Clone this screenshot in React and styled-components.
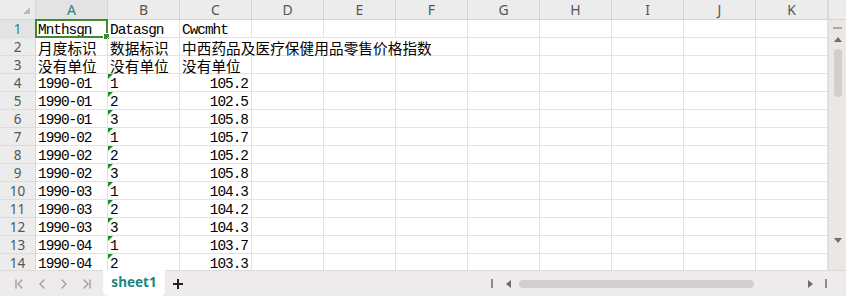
import React from "react";
import styled, { createGlobalStyle, css } from "styled-components";

const Global = createGlobalStyle`
  html, body { margin: 0; padding: 0; background: #fff; }
  body { font-family: "Noto Sans", "Noto Sans CJK SC", sans-serif; }
`;

const COLS = ["A", "B", "C", "D", "E", "F", "G", "H", "I", "J", "K"];
const GREEN = "#3f8a2c";
const TEAL = "#1f8580";

const Frame = styled.div`
  width: 846px;
  height: 296px;
  display: flex;
  flex-direction: column;
  overflow: hidden;
`;

const Main = styled.div`
  display: flex;
  height: 270px;
  overflow: hidden;
`;

const Sheet = styled.div`
  display: grid;
  grid-template-columns: 36px repeat(11, 72px);
  grid-template-rows: 20px;
  grid-auto-rows: 18px;
  width: 828px;
  height: 270px;
  overflow: hidden;
  align-content: start;
`;

const Corner = styled.div`
  position: relative;
  background: #ececec;
  border-right: 1px solid #d6d6d6;
  border-bottom: 1px solid #d6d6d6;
  box-sizing: border-box;
  &::after {
    content: "";
    position: absolute;
    right: 5px;
    bottom: 5px;
    border-left: 7px solid transparent;
    border-bottom: 7px solid #b9b9b9;
  }
`;

const ColHead = styled.div`
  background: ${(p) => (p.$active ? "#e3e3e3" : "#ececec")};
  border-right: 1px solid #d6d6d6;
  border-bottom: 1px solid #d6d6d6;
  box-sizing: border-box;
  display: flex;
  align-items: center;
  justify-content: center;
  font-family: "Noto Sans", sans-serif;
  font-size: 14px;
  color: ${(p) => (p.$active ? TEAL : "#555")};
`;

const RowHead = styled.div`
  background: ${(p) => (p.$active ? "#e3e3e3" : "#ececec")};
  border-right: 1px solid #d6d6d6;
  border-bottom: 1px solid #dcdcdc;
  box-sizing: border-box;
  display: flex;
  align-items: center;
  justify-content: center;
  font-family: "Noto Sans", sans-serif;
  font-size: 13.5px;
  color: ${(p) => (p.$active ? TEAL : "#555")};
`;

const Cell = styled.div`
  position: relative;
  border-right: 1px solid #e2e2e2;
  border-bottom: 1px solid #e2e2e2;
  box-sizing: border-box;
  white-space: nowrap;
  padding: 1px 3px 0 2px;
  line-height: 17px;
  color: #000;
  text-align: ${(p) => (p.$right ? "right" : "left")};
  grid-column: span ${(p) => p.$span || 1};
  ${(p) =>
    p.$cjk
      ? css`
          font-family: "Noto Sans CJK SC", "Noto Sans", sans-serif;
          font-size: 14.6px;
          letter-spacing: 0.1px;
        `
      : css`
          font-family: "Liberation Mono", "DejaVu Sans Mono", monospace;
          font-size: 14.4px;
          letter-spacing: -1px;
          padding-top: 2px;
        `}
  ${(p) =>
    p.$flag &&
    css`
      &::before {
        content: "";
        position: absolute;
        left: 0;
        top: 0;
        border-top: 5px solid #1a8a2a;
        border-right: 5px solid transparent;
      }
    `}
`;

const Selection = styled.div`
  position: absolute;
  left: -1px;
  top: -1px;
  right: -1px;
  bottom: -1px;
  border: 2px solid ${GREEN};
  pointer-events: none;
  &::after {
    content: "";
    position: absolute;
    right: -4px;
    bottom: -4px;
    width: 5px;
    height: 5px;
    background: ${GREEN};
    border: 1px solid #fff;
  }
`;

const VScroll = styled.div`
  width: 18px;
  display: flex;
  flex-direction: column;
  align-items: center;
  background: #ebe7e5;
  border-left: 1px solid #dcdcdc;
  box-sizing: border-box;
`;

const VScrollHead = styled.div`
  align-self: stretch;
  height: 20px;
  background: #ececec;
  border-bottom: 1px solid #d6d6d6;
  box-sizing: border-box;
`;

const Dash = styled.div`
  width: 9px;
  height: 2px;
  background: #a9a9a9;
  margin-top: 7px;
`;

const Tri = styled.div`
  width: 0;
  height: 0;
  ${(p) =>
    p.$dir === "up" &&
    css`
      border-left: 4px solid transparent;
      border-right: 4px solid transparent;
      border-bottom: 5px solid #6e6e6e;
    `}
  ${(p) =>
    p.$dir === "down" &&
    css`
      border-left: 4px solid transparent;
      border-right: 4px solid transparent;
      border-top: 5px solid #6e6e6e;
    `}
  ${(p) =>
    p.$dir === "left" &&
    css`
      border-top: 4px solid transparent;
      border-bottom: 4px solid transparent;
      border-right: 5px solid #6e6e6e;
    `}
  ${(p) =>
    p.$dir === "right" &&
    css`
      border-top: 4px solid transparent;
      border-bottom: 4px solid transparent;
      border-left: 5px solid #6e6e6e;
    `}
`;

const VThumb = styled.div`
  width: 8px;
  height: 48px;
  border-radius: 4px;
  background: #d2cecd;
  margin-top: 7px;
`;

const VUp = styled.div`
  margin-top: 8px;
`;

const VSpacer = styled.div`
  flex: 1;
`;

const VDown = styled.div`
  margin-bottom: 27px;
`;

const Bottom = styled.div`
  height: 26px;
  background: #efebea;
  border-top: 1px solid #dedada;
  box-sizing: border-box;
  display: flex;
  align-items: stretch;
`;

const Nav = styled.div`
  display: flex;
  align-items: center;
  gap: 6px;
  padding-left: 12px;
  width: 103px;
  box-sizing: border-box;
`;

const NavBtn = styled.div`
  width: 16px;
  height: 16px;
  display: flex;
  align-items: center;
  justify-content: center;
`;

const Tab = styled.div`
  width: 62px;
  margin-top: -1px;
  background: #fff;
  border-radius: 0 0 5px 5px;
  display: flex;
  align-items: center;
  justify-content: center;
  font-family: "Noto Sans", sans-serif;
  font-weight: 700;
  font-size: 13.5px;
  color: ${TEAL};
  padding-bottom: 2px;
  box-sizing: border-box;
`;

const Plus = styled.div`
  width: 24px;
  display: flex;
  align-items: center;
  justify-content: center;
  margin-left: 1px;
`;

const HScroll = styled.div`
  margin-left: auto;
  width: 358px;
  display: flex;
  align-items: center;
  padding: 0 0 0 3px;
  box-sizing: border-box;
`;

const Bar = styled.div`
  width: 2px;
  height: 9px;
  background: #8e8e8e;
`;

const HThumb = styled.div`
  width: 235px;
  height: 8px;
  border-radius: 4px;
  background: #d3cfce;
  margin-left: 8px;
`;

const HLeft = styled.div`
  margin-left: 13px;
`;

const HRight = styled.div`
  margin-left: auto;
  margin-right: 12px;
`;

const HEnd = styled.div`
  margin-right: 19px;
`;

const Chevron = ({ dir, bar }) => (
  <svg width="14" height="14" viewBox="0 0 14 14" fill="none" stroke="#a5a5a5" strokeWidth="1.6" strokeLinecap="round" strokeLinejoin="round">
    {dir === "left" ? <path d="M9 3 L5 7 L9 11" /> : <path d="M5 3 L9 7 L5 11" />}
    {bar && (dir === "left" ? <path d="M3 3 V11" /> : <path d="M11 3 V11" />)}
  </svg>
);

const rows = [
  [
    { t: "Mnthsgn", sel: true },
    { t: "Datasgn" },
    { t: "Cwcmht" },
  ],
  [
    { t: "月度标识", cjk: true },
    { t: "数据标识", cjk: true },
    { t: "中西药品及医疗保健用品零售价格指数", cjk: true, span: 4 },
  ],
  [
    { t: "没有单位", cjk: true },
    { t: "没有单位", cjk: true },
    { t: "没有单位", cjk: true },
  ],
];

const data = [
  ["1990-01", "1", "105.2"],
  ["1990-01", "2", "102.5"],
  ["1990-01", "3", "105.8"],
  ["1990-02", "1", "105.7"],
  ["1990-02", "2", "105.2"],
  ["1990-02", "3", "105.8"],
  ["1990-03", "1", "104.3"],
  ["1990-03", "2", "104.2"],
  ["1990-03", "3", "104.3"],
  ["1990-04", "1", "103.7"],
  ["1990-04", "2", "103.3"],
];

data.forEach(([a, b, c]) =>
  rows.push([{ t: a }, { t: b, flag: true }, { t: c, right: true }])
);

export default function App() {
  return (
    <Frame>
      <Global />
      <Main>
        <Sheet>
          <Corner />
          {COLS.map((c) => (
            <ColHead key={c} $active={c === "A"}>
              {c}
            </ColHead>
          ))}
          {rows.map((cells, ri) => {
            const used = cells.reduce((s, c) => s + (c.span || 1), 0);
            const blanks = COLS.length - used;
            return (
              <React.Fragment key={ri}>
                <RowHead $active={ri === 0}>{ri + 1}</RowHead>
                {cells.map((c, ci) => (
                  <Cell
                    key={ci}
                    $cjk={c.cjk}
                    $right={c.right}
                    $flag={c.flag}
                    $span={c.span}
                  >
                    {c.t}
                    {c.sel && <Selection />}
                  </Cell>
                ))}
                {Array.from({ length: blanks }).map((_, i) => (
                  <Cell key={"b" + i} />
                ))}
              </React.Fragment>
            );
          })}
        </Sheet>
        <VScroll>
          <VScrollHead />
          <Dash />
          <VUp>
            <Tri $dir="up" />
          </VUp>
          <VThumb />
          <VSpacer />
          <VDown>
            <Tri $dir="down" />
          </VDown>
        </VScroll>
      </Main>
      <Bottom>
        <Nav>
          <NavBtn>
            <Chevron dir="left" bar />
          </NavBtn>
          <NavBtn>
            <Chevron dir="left" />
          </NavBtn>
          <NavBtn>
            <Chevron dir="right" />
          </NavBtn>
          <NavBtn>
            <Chevron dir="right" bar />
          </NavBtn>
        </Nav>
        <Tab>sheet1</Tab>
        <Plus>
          <svg width="12" height="12" viewBox="0 0 12 12">
            <path d="M6 1 V11 M1 6 H11" stroke="#222" strokeWidth="2" />
          </svg>
        </Plus>
        <HScroll>
          <Bar />
          <HLeft>
            <Tri $dir="left" />
          </HLeft>
          <HThumb />
          <HRight>
            <Tri $dir="right" />
          </HRight>
          <HEnd>
            <Bar />
          </HEnd>
        </HScroll>
      </Bottom>
    </Frame>
  );
}
